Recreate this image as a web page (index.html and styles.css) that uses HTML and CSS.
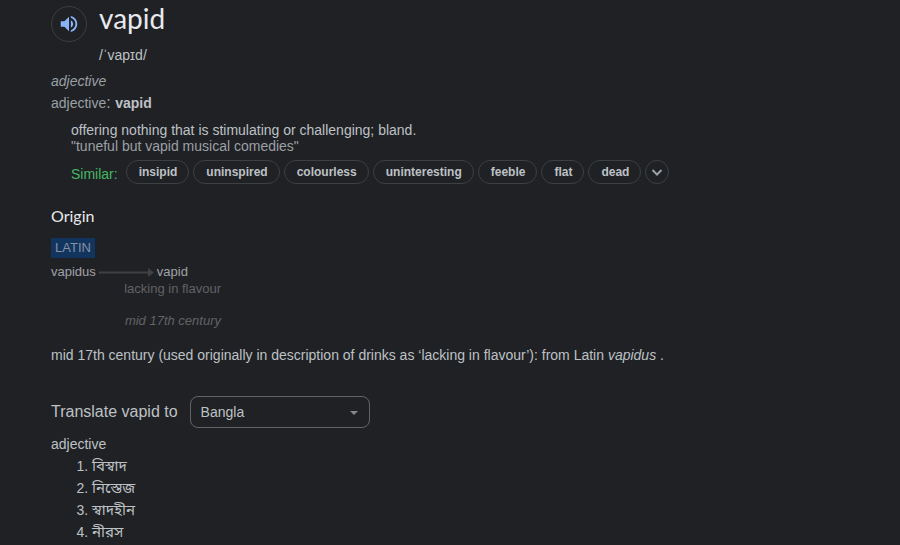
FILE: index.html
```html
<!DOCTYPE html>
<html lang="en">
<head>
<meta charset="utf-8">
<meta name="viewport" content="width=device-width, initial-scale=1">
<title>vapid</title>
<link rel="stylesheet" href="styles.css">
</head>
<body>
<main class="entry">
  <header class="head">
    <button class="speak" type="button" aria-label="Listen">
      <svg viewBox="0 0 24 24" width="22" height="22" fill="currentColor" aria-hidden="true"><path d="M3 9v6h4l5 5V4L7 9H3zm13.500 3c0-1.770-1.020-3.290-2.500-4.030v8.050c1.480-.730 2.500-2.250 2.500-4.020zM14 3.230v2.060c2.890.860 5 3.540 5 6.710s-2.110 5.850-5 6.710v2.060c4.010-.910 7-4.490 7-8.770s-2.990-7.860-7-8.770z"/></svg>
    </button>
    <div>
      <h1 class="word">vapid</h1>
      <p class="phonetic">/ˈvapɪd/</p>
    </div>
  </header>

  <p class="pos"><i>adjective</i></p>
  <p class="forms">adjective<span class="colon">: </span><b>vapid</b></p>

  <section class="sense">
    <p>offering nothing that is stimulating or challenging; bland.</p>
    <p class="example">"tuneful but vapid musical comedies"</p>
    <div class="similar">
      <span class="similar-label">Similar:</span>
      <button class="chip" type="button">insipid</button>
      <button class="chip" type="button">uninspired</button>
      <button class="chip" type="button">colourless</button>
      <button class="chip" type="button">uninteresting</button>
      <button class="chip" type="button">feeble</button>
      <button class="chip" type="button">flat</button>
      <button class="chip" type="button">dead</button>
      <button class="chip more" type="button" aria-label="Show more">
        <svg viewBox="0 0 12 12" width="12" height="12" fill="none" stroke="currentColor" stroke-width="2" aria-hidden="true"><path d="M1.500 4L6 8.500 10.500 4"/></svg>
      </button>
    </div>
  </section>

  <section>
    <h2 class="origin-title">Origin</h2>
    <div class="etymology">
      <span class="language">LATIN</span>
      <div class="path">
        <span>vapidus</span>
        <svg viewBox="0 0 55 9" width="55" height="9" aria-hidden="true"><path d="M0 3.500h50v2H0zM49 0l6 4.500L49 9z" fill="#404145"/></svg>
        <span>vapid</span>
      </div>
      <div class="gloss">
        <p>lacking in flavour</p>
        <p class="date"><i>mid 17th century</i></p>
      </div>
    </div>
    <p class="origin-text">mid 17th century (used originally in description of drinks as ‘lacking in flavour’): from Latin <i>vapidus</i> .</p>
  </section>

  <section>
    <div class="translate">
      <label for="language">Translate vapid to</label>
      <div class="picker">
        <select id="language"><option>Bangla</option></select>
        <svg class="caret" viewBox="0 0 8 4" width="8" height="4" aria-hidden="true"><path d="M0 0h8L4 4z" fill="#85888c"/></svg>
      </div>
    </div>
    <p class="translated-pos">adjective</p>
    <ol class="translations">
      <li><span lang="bn">বিস্বাদ</span></li>
      <li><span lang="bn">নিস্তেজ</span></li>
      <li><span lang="bn">স্বাদহীন</span></li>
      <li><span lang="bn">নীরস</span></li>
    </ol>
  </section>
</main>
</body>
</html>
```
FILE: styles.css
```css
* {
  box-sizing: border-box;
}

body {
  margin: 0;
  background: #202124;
  color: #bdc1c6;
  font: 14px/22px "Liberation Sans", Arial, sans-serif;
}

h1, h2, p, ol {
  margin: 0;
  padding: 0;
}

button, select {
  font: inherit;
  color: inherit;
  background: transparent;
}

.entry {
  padding: 0 20px 0 51px;
}

.head {
  display: flex;
  gap: 12px;
}

.speak {
  display: flex;
  align-items: center;
  justify-content: center;
  width: 36px;
  height: 36px;
  margin-top: 6px;
  padding: 0;
  border: 1px solid #3c4043;
  border-radius: 50%;
  color: #8ab4f8;
}

.word {
  color: #e8eaed;
  font: 400 28px/36px Lato, sans-serif;
}

.phonetic {
  margin-top: 8px;
}

.pos {
  margin-top: 4px;
  color: #9aa0a6;
}

.forms {
  color: #9aa0a6;
}

.forms b {
  color: #bdc1c6;
}

.colon {
  font-size: 16px;
}

.sense {
  margin: 8px 0 0 20px;
  line-height: 16px;
}

.example {
  color: #9aa0a6;
}

.similar {
  display: flex;
  flex-wrap: wrap;
  gap: 4px;
  margin-top: 6px;
}

.similar-label {
  margin-right: 4px;
  color: #46b865;
  line-height: 28px;
}

.chip {
  height: 24px;
  padding: 0 11px 0 12px;
  border: 1px solid #3c4043;
  border-radius: 12px;
  font-size: 12px;
  font-weight: 700;
  line-height: 22px;
}

.more {
  display: flex;
  align-items: center;
  justify-content: center;
  width: 24px;
  padding: 0;
  color: #9aa0a6;
}

.origin-title {
  margin-top: 16px;
  color: #e8eaed;
  font: 400 16px/24px Lato, sans-serif;
}

.etymology {
  margin-top: 10px;
  color: #a0a2a8;
  font-size: 13px;
  line-height: 16px;
}

.language {
  display: inline-block;
  padding: 2px 4px;
  background: #12355f;
  color: #8791a3;
}

.path {
  display: flex;
  align-items: center;
  gap: 3px;
  margin-top: 6px;
}

.gloss {
  width: 170px;
  margin-top: 1px;
  color: #606266;
  text-align: right;
}

.date {
  margin-top: 16px;
}

.origin-text {
  margin-top: 15px;
}

.translate {
  display: flex;
  align-items: center;
  gap: 12px;
  margin-top: 30px;
  font-size: 16px;
}

.picker {
  position: relative;
  width: 180px;
}

.picker select {
  display: block;
  appearance: none;
  width: 100%;
  height: 32px;
  padding: 0 10px;
  border: 1px solid #5f6368;
  border-radius: 8px;
  font-size: 14px;
}

.caret {
  position: absolute;
  top: 15px;
  right: 12px;
  pointer-events: none;
}

.translated-pos {
  margin-top: 5px;
}

.translations {
  padding-left: 41px;
}

.translations li {
  height: 22px;
}

.translations span {
  font-family: "Noto Sans Bengali", "Liberation Sans", sans-serif;
  font-size: 15px;
}
```
